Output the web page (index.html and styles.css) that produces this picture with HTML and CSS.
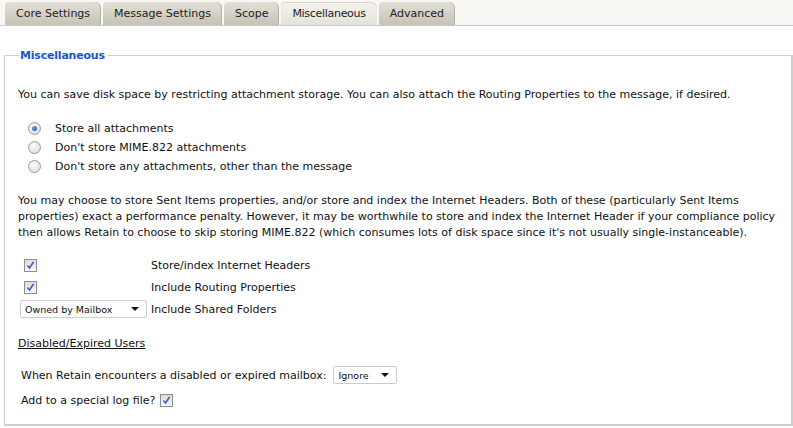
FILE: index.html
```html
<!DOCTYPE html>
<html>
<head>
<meta charset="utf-8">
<link rel="stylesheet" href="styles.css">
</head>
<body>
<div class="tabbar">
  <div class="tab">Core Settings</div>
  <div class="tab">Message Settings</div>
  <div class="tab">Scope</div>
  <div class="tab active">Miscellaneous</div>
  <div class="tab">Advanced</div>
</div>
<fieldset class="panel">
  <legend class="legend">Miscellaneous</legend>
  <p class="intro">You can save disk space by restricting attachment storage. You can also attach the Routing Properties to the message, if desired.</p>
  <div class="radios">
    <div class="radio-row"><span class="radio checked"></span><span>Store all attachments</span></div>
    <div class="radio-row"><span class="radio"></span><span>Don't store MIME.822 attachments</span></div>
    <div class="radio-row"><span class="radio"></span><span>Don't store any attachments, other than the message</span></div>
  </div>
  <p class="para">You may choose to store Sent Items properties, and/or store and index the Internet Headers. Both of these (particularly Sent Items properties) exact a performance penalty. However, it may be worthwhile to store and index the Internet Header if your compliance policy then allows Retain to choose to skip storing MIME.822 (which consumes lots of disk space since it's not usually single-instanceable).</p>
  <div class="opts">
    <div class="opt-row"><div class="opt-ctl"><span class="check"><svg width="9" height="9" viewBox="0 0 9 9"><path d="M1.5 4.5 L3.5 7 L7.5 1" fill="none" stroke="#3b5fc0" stroke-width="1.6"/></svg></span></div><span>Store/index Internet Headers</span></div>
    <div class="opt-row"><div class="opt-ctl"><span class="check"><svg width="9" height="9" viewBox="0 0 9 9"><path d="M1.5 4.5 L3.5 7 L7.5 1" fill="none" stroke="#3b5fc0" stroke-width="1.6"/></svg></span></div><span>Include Routing Properties</span></div>
    <div class="opt-row"><div class="opt-ctl sel-ctl"><span class="select wide"><span class="sel-text">Owned by Mailbox</span><span class="arrow"></span></span></div><span>Include Shared Folders</span></div>
  </div>
  <div class="subhead">Disabled/Expired Users</div>
  <div class="line-row first">When Retain encounters a disabled or expired mailbox:<span class="select small"><span class="sel-text">Ignore</span><span class="arrow"></span></span></div>
  <div class="line-row log">Add to a special log file?<span class="check"><svg width="9" height="9" viewBox="0 0 9 9"><path d="M1.5 4.5 L3.5 7 L7.5 1" fill="none" stroke="#3b5fc0" stroke-width="1.6"/></svg></span></div>
</fieldset>
</body>
</html>
```
FILE: styles.css
```css
html, body {
  margin: 0;
  padding: 0;
  background: #f7f7f7;
}
body {
  width: 793px;
  height: 428px;
  overflow: hidden;
  font-family: Tahoma, "DejaVu Sans", sans-serif;
  font-size: 11px;
  color: #111;
  background: #fff;
}
.tabbar {
  display: flex;
  align-items: flex-end;
  height: 26px;
  padding-left: 5px;
  gap: 2px;
  background: #f9f8f5;
  border-bottom: 1px solid #c9c9c9;
  box-sizing: border-box;
}
.tab {
  height: 23px;
  padding: 0 11px;
  display: flex;
  align-items: center;
  font-size: 11px;
  color: #222;
  background: linear-gradient(#e3e0d7, #c6c2b6);
  border-radius: 4px 6px 0 0;
  box-sizing: border-box;
  box-shadow: inset -1px 0 0 #b5b1a5;
}
.tab.active {
  background: linear-gradient(#f4f3ef, #e4e2da);
  box-shadow: inset 0 1px 0 #d6d3ca;
  letter-spacing: -0.3px;
}
.panel {
  margin: 23px 0 0 4px;
  padding: 0 0 0 13px;
  border: 1px solid #cfcfcf;
  border-right: 2px solid #cfcfcf;
  border-bottom: 2px solid #cfcfcf;
  height: 377px;
  box-sizing: border-box;
  background: #fff;
}
.legend {
  padding: 0 2px 0 1px;
  margin-left: 1px;
  font-weight: bold;
  font-size: 11px;
  letter-spacing: -0.2px;
  color: #1c56c9;
}
.intro {
  margin: 25px 0 0 0;
  line-height: 16px;
}
.radios {
  margin: 17px 0 0 10px;
  display: flex;
  flex-direction: column;
  gap: 3px;
}
.radio-row {
  display: flex;
  align-items: center;
  gap: 14px;
  height: 16px;
}
.radio {
  width: 11px;
  height: 11px;
  border-radius: 50%;
  border: 1px solid #9a9a9a;
  background: radial-gradient(circle at 40% 35%, #fdfdfd, #d6d6d6);
  position: relative;
}
.radio.checked::after {
  content: "";
  position: absolute;
  left: 3px;
  top: 3px;
  width: 5px;
  height: 5px;
  border-radius: 50%;
  background: radial-gradient(circle at 40% 35%, #6fa4e8, #1a4fa8);
}
.para {
  margin: 19px 0 0 0;
  line-height: 16px;
}
.opts {
  margin-top: 16px;
  display: flex;
  flex-direction: column;
  gap: 6px;
}
.opt-row {
  display: flex;
  align-items: center;
  height: 16px;
}
.opt-ctl {
  width: 133px;
  padding-left: 6px;
  box-sizing: border-box;
  display: flex;
  align-items: center;
}
.sel-ctl {
  padding-left: 2px;
}
.check {
  display: inline-flex;
  align-items: center;
  justify-content: center;
  width: 11px;
  height: 11px;
  border: 1px solid #8e8e8e;
  background: linear-gradient(#dcdcdc, #f6f6f6);
}
.select {
  display: inline-flex;
  align-items: center;
  justify-content: space-between;
  height: 18px;
  border: 1px solid #cdcdcd;
  border-radius: 2px;
  background: #fff;
  box-sizing: border-box;
  padding: 0 7px 0 4px;
  font-size: 9.5px;
  color: #111;
}
.select.wide {
  width: 127px;
}
.select.small {
  width: 64px;
  margin-left: 7px;
}
.arrow {
  width: 0;
  height: 0;
  border-left: 4px solid transparent;
  border-right: 4px solid transparent;
  border-top: 4px solid #111;
}
.subhead {
  margin-top: 19px;
  text-decoration: underline;
  line-height: 16px;
}
.line-row {
  display: flex;
  align-items: center;
  margin-left: 3px;
  height: 20px;
}
.line-row.first {
  margin-top: 13px;
}
.log {
  margin-top: 5px;
}
.log .check {
  margin-left: 5px;
}
```
